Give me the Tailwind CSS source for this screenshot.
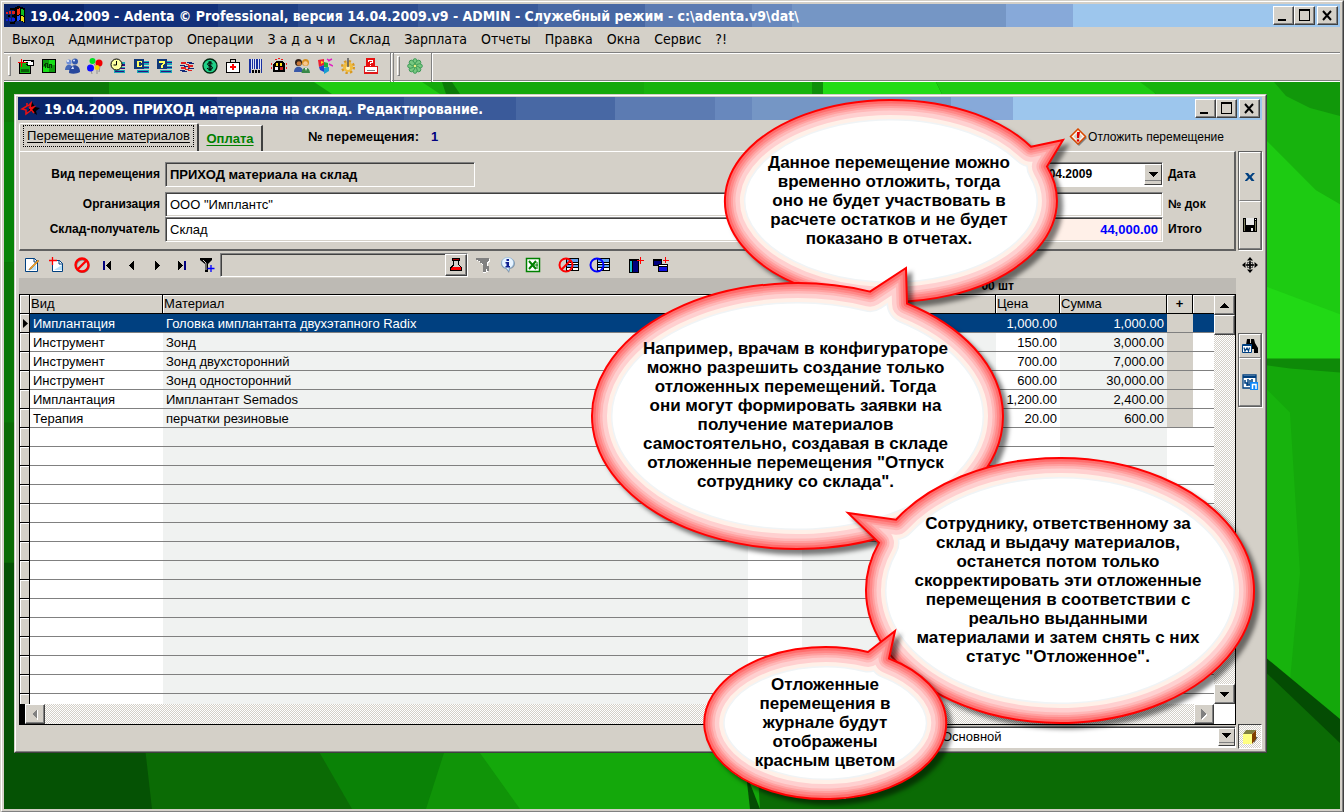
<!DOCTYPE html>
<html lang="ru">
<head>
  <meta charset="UTF-8">
  <meta name="viewport" content="width=device-width, initial-scale=1.0">
  <title>Adenta © Professional</title>
  <script src="https://cdn.jsdelivr.net/npm/@tailwindcss/browser@4"></script>
</head>
<body class="relative min-h-screen flex flex-col overflow-hidden bg-[#d4d0c8] text-black text-[13px] leading-4 font-['Liberation_Sans',Arial,sans-serif]">

  <!-- Application window -->
  <div class="flex-1 flex flex-col border border-t-[#d4d0c8] border-l-[#d4d0c8] border-r-[#404040] border-b-[#404040]">
  <div class="flex-1 flex flex-col border border-t-white border-l-white border-r-[#808080] border-b-[#808080] p-[2px]">

    <!-- Title bar -->
    <header class="h-[23px] flex items-center gap-1 pl-[2px] pr-[2px] bg-[linear-gradient(90deg,#0a246a_0_6%,#12307a_0_16%,#1f3f84_0_22%,#2c4c90_0_31%,#3a5a9a_0_40%,#4868a4_0_48%,#5c7bb2_0_56%,#6888bd_0_59%,#7596c5_0_75%,#87a9d9_0_80%,#9dc6ed_0)]">
      <svg class="w-5 h-5 shrink-0" viewBox="0 0 20 20" shape-rendering="crispEdges">
        <path d="M8 2l4-2 7 2v15l-4-2-4 0-3 2z" fill="#000"/>
        <path d="M11 3l3-1v6l-3 1z" fill="#f03010"/><path d="M15 3l3 1v6l-3-1z" fill="#10c020"/>
        <path d="M11 10l3-1v5l-3 1z" fill="#2050f0"/><path d="M15 10l3 1v5l-3-1z" fill="#f0e010"/>
        <path d="M0 6h2v2h-2zM3 5h2v3h-2zM6 5h3v3h-3z" fill="#e02020"/><path d="M0 13h2v2h-2zM3 12h2v3h-2zM6 12h3v3h-3z" fill="#1020e0"/>
        <path d="M2 9h2v2h-2zM6 9h3v2h-3zM4 2h4v2h-4zM4 16h5v2h-5z" fill="#000"/>
      </svg>
      <h1 class="flex-1 text-sm font-bold text-white whitespace-nowrap font-['DejaVu_Sans_Condensed','Noto_Sans',sans-serif]">19.04.2009 - Adenta © Professional, версия 14.04.2009.v9 - ADMIN - Служебный режим - c:\adenta.v9\dat\</h1>
      <div class="flex">
        <button aria-label="Свернуть" class="w-[21px] h-[19px] bg-[#d4d0c8] border border-t-white border-l-white border-r-[#404040] border-b-[#404040] shadow-[inset_-1px_-1px_#808080]"><svg class="w-full h-full" viewBox="0 0 19 17" shape-rendering="crispEdges"><path d="M4 12h8v2h-8z"/></svg></button>
        <button aria-label="Восстановить" class="w-[21px] h-[19px] bg-[#d4d0c8] border border-t-white border-l-white border-r-[#404040] border-b-[#404040] shadow-[inset_-1px_-1px_#808080]"><svg class="w-full h-full" viewBox="0 0 19 17" shape-rendering="crispEdges"><path fill-rule="evenodd" d="M4 2h11v12h-11zM5 4v9h9v-9z"/></svg></button>
        <button aria-label="Закрыть" class="ml-[2px] w-[21px] h-[19px] bg-[#d4d0c8] border border-t-white border-l-white border-r-[#404040] border-b-[#404040] shadow-[inset_-1px_-1px_#808080]"><svg class="w-full h-full" viewBox="0 0 19 17"><path d="M5 4l8 9M13 4l-8 9" stroke="#000" stroke-width="2"/></svg></button>
      </div>
    </header>

    <!-- Main menu -->
    <nav class="h-[25px] flex items-center gap-[14px] px-2 pb-px text-sm whitespace-nowrap font-['DejaVu_Sans_Condensed','Noto_Sans',sans-serif]">
      <a href="#">Выход</a>
      <a href="#">Администратор</a>
      <a href="#">Операции</a>
      <a href="#">З а д а ч и</a>
      <a href="#">Склад</a>
      <a href="#">Зарплата</a>
      <a href="#">Отчеты</a>
      <a href="#">Правка</a>
      <a href="#">Окна</a>
      <a href="#">Сервис</a>
      <a href="#">?!</a>
    </nav>

    <!-- Toolbar -->
    <div class="h-[30px] flex border-t border-[#808080] shadow-[inset_0_1px_#fff,inset_0_-1px_#fff,inset_0_-2px_#808080]">
      <div class="flex items-center pl-1 pr-2 pb-[3px] border-r border-[#808080] shadow-[1px_0_#fff]">
        <span class="w-[3px] h-5 mr-[3px] border border-t-white border-l-white border-r-[#808080] border-b-[#808080]"></span>
        <button aria-label="Рабочий стол" class="w-[23px] h-6 flex items-center justify-center"><svg class="w-4 h-4" viewBox="0 0 16 16" shape-rendering="crispEdges"><path d="M1 4h12v12h-12z"/><path d="M2 5h10v10h-10z" fill="#10b010"/><path d="M3 11h8v3h-8z" fill="#086008"/><path d="M5 2h11v6h-7l-2-2h3v-1h-5z"/><path d="M6 3h7v1h-7zM10 4h5v3h-5z" fill="#fff"/><path d="M3 1h1v8h-1zM0 4h8v1h-8z" fill="#f00"/></svg></button>
        <button aria-label="График" class="w-[23px] h-6 flex items-center justify-center"><svg class="w-4 h-4" viewBox="0 0 16 16" shape-rendering="crispEdges"><path d="M1 1h14v14h-14z"/><path d="M2 2h12v12h-12z" fill="#0c9c0c"/><path d="M8 2h6v5h-6zM2 9h6v5h-6z" fill="#18e018"/><path d="M3 6h1v-1h3v4h1v-3h3v4h-1v-3h-1v3h-3v-4h-1v4h-1z" fill="#043c04"/></svg></button>
        <button aria-label="Пациенты" class="w-[23px] h-6 flex items-center justify-center"><svg class="w-4 h-4" viewBox="0 0 16 16"><circle cx="5" cy="4" r="2.600" fill="#6f8fd8"/><path d="M1 12c0-7 8-7 8 0z" fill="#4468b8"/><circle cx="11" cy="3.500" r="3" fill="#3157ac"/><path d="M5 15c0-10 11-10 11-1-3 2-8 2-11 1z" fill="#28489c"/><circle cx="4" cy="3" r="1" fill="#fff"/><circle cx="10" cy="2.500" r="1" fill="#dbe6ff"/><path d="M7 11l2-3 1 3z" fill="#dbe6ff"/></svg></button>
        <button aria-label="Шары" class="w-[23px] h-6 flex items-center justify-center"><svg class="w-4 h-4" viewBox="0 0 16 16"><path d="M7 6l3 4v6M4 12l1 4M13 8l-1 6" fill="none" stroke="#909090"/><circle cx="5.500" cy="3" r="3" fill="#00e020"/><circle cx="12" cy="5" r="3.500" fill="#f00000"/><circle cx="3.500" cy="10" r="3.500" fill="#1010ff"/><circle cx="10" cy="9.500" r="2.500" fill="#f8d000"/></svg></button>
        <button aria-label="Время" class="w-[23px] h-6 flex items-center justify-center"><svg class="w-4 h-4" viewBox="0 0 16 16"><path d="M6 4h9v3h-9zM6 9h9v2h-9zM4 12h11v3h-11z" fill="#18a8b8"/><path d="M10 6h5v2h-5zM10 10h5v1h-5zM5 13h9v1h-9z" fill="#301080"/><circle cx="6.500" cy="6.500" r="5.500" fill="#ffffa0" stroke="#000"/><path d="M6.500 3v4h-3" fill="none" stroke="#000"/></svg></button>
        <button aria-label="Касса" class="w-[23px] h-6 flex items-center justify-center"><svg class="w-4 h-4" viewBox="0 0 16 16" shape-rendering="crispEdges"><path d="M9 3h7v4h-7zM9 8h7v3h-7zM4 12h12v3h-12z" fill="#18a8b8"/><path d="M11 4h5v1h-5zM11 9h5v1h-5zM5 13h10v1h-10z" fill="#301080"/><path d="M1 1h10v10h-10z" fill="#103878"/><path d="M9 3h-5v6h5v-2h-1v1h-2v-4h2v1h1z" fill="#ffff60"/></svg></button>
        <button aria-label="Неделя" class="w-[23px] h-6 flex items-center justify-center"><svg class="w-4 h-4" viewBox="0 0 16 16" shape-rendering="crispEdges"><path d="M9 3h7v4h-7zM9 8h7v3h-7zM4 12h12v3h-12z" fill="#18a8b8"/><path d="M11 4h5v1h-5zM11 9h5v1h-5zM5 13h10v1h-10z" fill="#301080"/><path d="M1 1h10v10h-10z" fill="#103878"/><path d="M3 3h6v2l-2 2v3h-2v-3l2-2h-4z" fill="#ffff60"/></svg></button>
        <button aria-label="Обмен" class="w-[23px] h-6 flex items-center justify-center"><svg class="w-4 h-4" viewBox="0 0 16 16" shape-rendering="crispEdges"><path d="M2 4h5v2h3v1h-3v-1h-5zM9 7h5v2h-3v1h-2zM2 9h5v2h3v1h-4v-1h-4zM9 12h4v1h-4z" fill="#e02020"/><path d="M8 4h5v1h2v1h-5v-1h-2zM1 7h5v1h3v1h-4v-1h-4zM9 10h6v1h-6zM1 12h5v1h2v1h-5v-1h-2z" fill="#102878"/></svg></button>
        <button aria-label="Деньги" class="w-[23px] h-6 flex items-center justify-center"><svg class="w-4 h-4" viewBox="0 0 16 16"><circle cx="8" cy="8" r="7" fill="#20d088" stroke="#002810" stroke-width="1.300"/><path d="M10.500 5.800c-1-1.500-5-1.500-5 .4s5 1.500 5 3.600-4.500 2-5.500.3M7.200 3v10M8.800 3v10" fill="none" stroke="#000" stroke-width="1"/></svg></button>
        <button aria-label="Аптечка" class="w-[23px] h-6 flex items-center justify-center"><svg class="w-4 h-4" viewBox="0 0 16 16" shape-rendering="crispEdges"><path d="M5 1h6v3h4v11h-14v-11h4z"/><path d="M6 2h4v2h-4z" fill="#d4d0c8"/><path d="M2 5h12v9h-12z" fill="#fff"/><path d="M7 6h2v2h2v2h-2v2h-2v-2h-2v-2h2z" fill="#f00"/></svg></button>
        <button aria-label="Штрих-код" class="w-[23px] h-6 flex items-center justify-center"><svg class="w-4 h-4" viewBox="0 0 16 16" shape-rendering="crispEdges"><path d="M1 1h13v10h-13z" fill="#e0e4f4"/><path d="M1 1h2v14h-2zM4 1h1v10h-1zM6 1h1v10h-1zM8 1h2v10h-2zM11 1h1v10h-1zM13 1h1v14h-1z" fill="#1830a0"/><path d="M4 12h2v3h-2zM7 12h2v3h-2zM10 12h2v3h-2z"/></svg></button>
        <button aria-label="Склад" class="w-[23px] h-6 flex items-center justify-center"><svg class="w-4 h-4" viewBox="0 0 16 16" shape-rendering="crispEdges"><path d="M5 3h6l3 3v8h-12v-8z"/><path d="M5 5h2v3h-2zM9 5h2v3h-2z" fill="#ffe020"/><path d="M4 9h3v3h-3z" fill="#f8f8f8"/><path d="M9 9h3v3h-3z" fill="#d02020"/><path d="M4 1h2v1h-2zM10 1h2v1h-2zM0 5h1v2h-1zM15 5h1v2h-1zM0 9h1v2h-1zM15 9h1v2h-1zM7 0h2v1h-2z" fill="#f02020"/></svg></button>
        <button aria-label="Сотрудники" class="w-[23px] h-6 flex items-center justify-center"><svg class="w-4 h-4" viewBox="0 0 16 16"><circle cx="4.500" cy="4.500" r="3.500" fill="#302018"/><circle cx="5" cy="5.500" r="2.300" fill="#c87838"/><path d="M0 14c0-7 9-7 9 0z" fill="#3858a8"/><circle cx="11.500" cy="4.500" r="3.500" fill="#d89020"/><circle cx="11.500" cy="5.500" r="2.300" fill="#f8c890"/><path d="M7.500 15c0-7 8.500-7 8.500 0z" fill="#388848"/><path d="M11 10l1 3 1-3z" fill="#fff"/></svg></button>
        <button aria-label="Кубики" class="w-[23px] h-6 flex items-center justify-center"><svg class="w-4 h-4" viewBox="0 0 16 16"><path d="M1 2l6-1v6l-5 2z" fill="#f02030"/><path d="M7 4l4 1v5l-4-1z" fill="#20b040"/><path d="M2 9l5-2v7l-4-2z" fill="#2040d0"/><path d="M7 10l5-1v4l-5 3z" fill="#18a0d0"/><path d="M10 1l3 2M12 6l4 2M11 3l4-2" stroke="#e020c0" stroke-width="1.500"/><path d="M4 3l3 1-3 2z" fill="#f8e020"/></svg></button>
        <button aria-label="Настройка" class="w-[23px] h-6 flex items-center justify-center"><svg class="w-4 h-4" viewBox="0 0 16 16"><circle cx="8" cy="9" r="5.800" fill="none" stroke="#d89820" stroke-width="2.500" stroke-dasharray="2.300 2.250"/><circle cx="8" cy="9" r="5" fill="#f0bc40"/><circle cx="8" cy="10" r="2" fill="#fff0b0"/><path d="M8 0v9" stroke="#585858" stroke-width="1.500"/></svg></button>
        <button aria-label="Справка" class="w-[23px] h-6 flex items-center justify-center"><svg class="w-4 h-4" viewBox="0 0 16 16" shape-rendering="crispEdges"><path d="M1 8h14v8h-14z" fill="#e01818"/><path d="M2 9h12v5h-12z" fill="#fff"/><path d="M4 12h8v1h-8z" fill="#808080"/><path d="M3 0h9v9h-9z" fill="#e81010"/><path d="M5 2h5v3h-2v1h-1v-2h2v-1h-3v1h-1zM7 7h1v1h-1z" fill="#fff"/></svg></button>
      </div>
      <div class="ml-[2px] flex items-center pl-[3px] pr-[5px] pb-[3px] border-x border-[#808080] shadow-[1px_0_#fff]">
        <span class="w-[3px] h-5 mr-[3px] border border-t-white border-l-white border-r-[#808080] border-b-[#808080]"></span>
        <button aria-label="Цветок" class="w-[23px] h-6 flex items-center justify-center"><svg class="w-4 h-4" viewBox="0 0 16 16"><g fill="#78c880" stroke="#30904c" stroke-width=".8"><ellipse id="petal" cx="8" cy="3.600" rx="2.200" ry="3"/><use href="#petal" transform="rotate(45 8 8)"/><use href="#petal" transform="rotate(90 8 8)"/><use href="#petal" transform="rotate(135 8 8)"/><use href="#petal" transform="rotate(180 8 8)"/><use href="#petal" transform="rotate(225 8 8)"/><use href="#petal" transform="rotate(270 8 8)"/><use href="#petal" transform="rotate(315 8 8)"/></g><circle cx="8" cy="8" r="1.300" fill="#e8f080"/></svg></button>
      </div>
    </div>

    <!-- Desktop -->
    <main class="relative flex-1 flex flex-col pt-3 pl-[10px] pr-[73px] pb-14 bg-[#0b6b05]">
      <svg class="absolute inset-0 w-full h-full" viewBox="0 0 1336 726" preserveAspectRatio="none">
        <path d="M0 0h1336v726H0z" fill="#0b6b05"/>
        <path d="M0 0h110v40H0z" fill="#0c7a08"/><path d="M0 40h12v140H0z" fill="#088408"/><path d="M0 180h12v160H0z" fill="#0a7806"/>
        <path d="M0 480h120l28 246H0z" fill="#055204"/>
        <path d="M105 0h210l20 12H105z" fill="#0f9a0a"/><path d="M310 0h120l12 12H328z" fill="#1fcb12"/><path d="M418 0h320v12H436z" fill="#15a90c"/><path d="M438 0h10l8 12h-14z" fill="#0c7a08"/>
        <path d="M640 0h178v12H640z" fill="#17b30d"/><path d="M808 0h11v12h-11z" fill="#0f8f0a"/>
        <path d="M819 0h113l6 12H819z" fill="#22dc16"/><path d="M932 0h208l12 12H938z" fill="#1dcb12"/>
        <path d="M1136 0h200v270h-80V12h-100z" fill="#1dcb12"/>
        <path d="M1136 0h200v122l-24-14-50-50-6-46h-104z" fill="#17b30d"/><path d="M1270 0h66v34l-30-8-24-12z" fill="#11980a"/>
        <path d="M1256 202l80 30v46h-80z" fill="#21d915"/>
        <path d="M1256 278h80v362l-80-70z" fill="#14a80b"/><path d="M1256 276h80v14l-50-4-30-4z" fill="#0e8a08"/>
        <path d="M1256 300l30 30 10 160-10 108-30-26z" fill="#17b30d"/>
        <path d="M1256 570l80 66v24l-80-76z" fill="#044c03"/>
        <path d="M310 660h180l-10 66H348z" fill="#0a8206"/><path d="M450 660h310v66H430z" fill="#14a80b"/><path d="M440 670h36l40 56h-94z" fill="#109408"/>
        <path d="M742 690l14 36h-10z" fill="#044c03"/>
        <path d="M752 660h504v66H756z" fill="#0b6b05"/>
      </svg>

      <!-- Document window -->
      <section class="relative flex-1 flex flex-col bg-[#d4d0c8] border border-t-[#d4d0c8] border-l-[#d4d0c8] border-r-[#404040] border-b-[#404040]">
      <div class="flex-1 flex flex-col pl-[2px] pr-[3px] pt-px border border-t-white border-l-white border-r-[#808080] border-b-[#808080]">
        <header class="h-[23px] flex items-center gap-1 pl-[2px] pr-[2px] bg-[linear-gradient(90deg,#0a246a_0_6%,#12307a_0_16%,#1f3f84_0_22%,#2c4c90_0_31%,#3a5a9a_0_40%,#4868a4_0_48%,#5c7bb2_0_56%,#6888bd_0_59%,#7596c5_0_75%,#87a9d9_0_80%,#9dc6ed_0)]">
          <svg class="w-5 h-5 shrink-0" viewBox="0 0 20 20"><path d="M12 3l3 5 5 1-4 3 1 4-6-4-3 1 2-5z" fill="#000"/><path d="M7 4v3l-5 3 4 1v4l4-3 4-4-4 1 1-5-3 3M9 8l5 6" fill="none" stroke="#f01010" stroke-width="1.500"/></svg>
          <h2 class="flex-1 text-sm font-bold text-white whitespace-nowrap font-['DejaVu_Sans_Condensed','Noto_Sans',sans-serif]">19.04.2009. ПРИХОД материала на склад. Редактирование.</h2>
          <div class="flex">
            <button aria-label="Свернуть окно" class="w-[21px] h-[19px] bg-[#d4d0c8] border border-t-white border-l-white border-r-[#404040] border-b-[#404040] shadow-[inset_-1px_-1px_#808080]"><svg class="w-full h-full" viewBox="0 0 19 17" shape-rendering="crispEdges"><path d="M4 12h8v2h-8z"/></svg></button>
            <button aria-label="Развернуть окно" class="w-[21px] h-[19px] bg-[#d4d0c8] border border-t-white border-l-white border-r-[#404040] border-b-[#404040] shadow-[inset_-1px_-1px_#808080]"><svg class="w-full h-full" viewBox="0 0 19 17" shape-rendering="crispEdges"><path fill-rule="evenodd" d="M4 2h11v12h-11zM5 4v9h9v-9z"/></svg></button>
            <button aria-label="Закрыть окно" class="ml-[2px] w-[21px] h-[19px] bg-[#d4d0c8] border border-t-white border-l-white border-r-[#404040] border-b-[#404040] shadow-[inset_-1px_-1px_#808080]"><svg class="w-full h-full" viewBox="0 0 19 17"><path d="M5 4l8 9M13 4l-8 9" stroke="#000" stroke-width="2"/></svg></button>
          </div>
        </header>

        <!-- Tabs -->
        <div class="h-[31px] flex items-end pl-px whitespace-nowrap">
          <button class="h-7 w-[180px] pb-1 border-t border-l border-white border-r-2 border-r-[#404040] rounded-t-xs"><span class="inline-block px-[3px] py-[2px] border border-dotted border-black underline underline-offset-2">Перемещение материалов</span></button>
          <button class="h-[26px] w-16 border-t border-white border-r-2 border-r-[#404040] font-bold text-[#008000] underline underline-offset-2">Оплата</button>
          <p class="h-[22px] ml-[45px] font-bold">№ перемещения:</p>
          <p class="h-[22px] ml-[12px] font-bold text-[#000080]">1</p>
          <button class="h-7 ml-auto mr-[38px] flex items-center gap-px text-xs">
            <svg class="w-[18px] h-[18px]" viewBox="0 0 18 18"><path d="M10 2l8 8-8 8-8-8z" fill="#808080"/><path d="M9 1l7.500 7.500-7.500 7.500-7.500-7.500z" fill="#fff4ec" stroke="#d84800" stroke-width="1.500"/><path d="M9 4l4.500 4.500-4.500 4.500-4.500-4.500z" fill="#d4d0c8"/><path d="M8 4h3l-1 6h-2z" fill="#e00000"/><circle cx="9" cy="12.500" r="1.300" fill="#e00000"/></svg>
            Отложить перемещение
          </button>
        </div>

        <div class="flex-1 flex">
          <div class="flex-1 min-w-0 flex flex-col pl-px">
            <!-- Header form -->
            <form class="h-[100px] pt-[10px] grid grid-cols-[140px_minmax(0,1fr)_150px_66px] grid-rows-[30px_25px_25px] content-start items-start gap-x-[5px] text-xs leading-[25px] font-bold border-t border-l border-white border-r-2 border-b-2 border-r-[#606060] border-b-[#606060]">
              <label for="kind" class="text-right">Вид перемещения</label>
              <input id="kind" readonly value="ПРИХОД материала на склад" class="w-[310px] h-[25px] px-1 text-[13px] bg-[#d4d0c8] border border-t-[#808080] border-l-[#808080] border-r-white border-b-white shadow-[inset_1px_1px_#404040]">
              <div class="h-[25px] flex bg-white border border-t-[#808080] border-l-[#808080] border-r-white border-b-white shadow-[inset_1px_1px_#404040]">
                <input id="date" value="19.04.2009" class="flex-1 min-w-0 pl-[18px]">
                <button type="button" aria-label="Календарь" class="m-[1px] mr-0 w-[18px] border border-t-white border-l-white border-r-[#404040] border-b-[#404040] bg-[#d4d0c8] flex flex-col items-center justify-between pt-1"><svg class="w-[9px] h-[10px]" viewBox="0 0 9 10" shape-rendering="crispEdges"><path d="M0 3h9v1h-1v1h-1v1h-1v1h-1v1h-1v-1h-1v-1h-1v-1h-1v-1h-1z"/></svg><span class="w-full h-1 border-t border-[#808080]"></span></button>
              </div>
              <label for="date">Дата</label>

              <label for="org" class="text-right">Организация</label>
              <input id="org" value='ООО "Имплантс"' class="mr-24 h-[25px] px-1 text-[13px] font-normal bg-white border border-t-[#808080] border-l-[#808080] border-r-white border-b-white shadow-[inset_1px_1px_#404040,inset_-1px_-1px_#d4d0c8]">
              <input id="doc" class="h-[25px] px-1 bg-white border border-t-[#808080] border-l-[#808080] border-r-white border-b-white shadow-[inset_1px_1px_#404040,inset_-1px_-1px_#d4d0c8]">
              <label for="doc">№ док</label>

              <label for="store" class="text-right">Склад-получатель</label>
              <input id="store" value="Склад" class="mr-24 h-[25px] px-1 text-[13px] font-normal bg-white border border-t-[#808080] border-l-[#808080] border-r-white border-b-white shadow-[inset_1px_1px_#404040,inset_-1px_-1px_#d4d0c8]">
              <input id="total" readonly value="44,000.00" class="h-[25px] px-1 text-[13px] text-right text-[#0000ff] bg-[#fff0e8] border border-t-[#808080] border-l-[#808080] border-r-white border-b-white shadow-[inset_1px_1px_#404040,inset_-1px_-1px_#d4d0c8]">
              <label for="total">Итого</label>
            </form>

            <!-- Grid toolbar -->
            <div class="h-[27px] flex items-center">
              <button aria-label="Изменить" class="w-[25px] h-6 flex items-center justify-center"><svg class="w-4 h-4" viewBox="0 0 16 16"><path d="M1.500 1.500h9l3 3v10h-12z" fill="#fff" stroke="#004080"/><path d="M3 13h9v-5z" fill="#b8e0f8"/><path d="M10 1v4h4" fill="none" stroke="#004080"/><path d="M15 4l-8 8-2 1 1-2 8-8z" fill="#f0a020" stroke="#a06010" stroke-width=".5"/></svg></button>
              <button aria-label="Добавить" class="w-[25px] h-6 flex items-center justify-center"><svg class="w-4 h-4" viewBox="0 0 16 16"><path d="M3.500 3.500h7l3 3v8h-10z" fill="#fff" stroke="#004080"/><path d="M5 13h8v-5z" fill="#b8e0f8"/><path d="M10 3v4h4" fill="none" stroke="#004080"/><path d="M3.500 0v8M0 3.500h8" stroke="#f00" stroke-width="1.300"/></svg></button>
              <button aria-label="Удалить" class="w-[25px] h-6 flex items-center justify-center"><svg class="w-4 h-4" viewBox="0 0 16 16"><circle cx="8.500" cy="8.800" r="6.300" fill="none" stroke="#808080" stroke-width="2"/><circle cx="8" cy="8" r="6.500" fill="none" stroke="#f00" stroke-width="2.300"/><path d="M12.500 3.500l-9 9" stroke="#f00" stroke-width="2.300"/></svg></button>
              <button aria-label="Первая" class="w-[25px] h-6 flex items-center justify-center"><svg class="w-4 h-4" viewBox="0 0 16 16" shape-rendering="crispEdges"><path d="M4 4h2v9h-2z" fill="#000080"/><path d="M12 4v9l-5-4.500z"/></svg></button>
              <button aria-label="Предыдущая" class="w-[25px] h-6 flex items-center justify-center"><svg class="w-4 h-4" viewBox="0 0 16 16" shape-rendering="crispEdges"><path d="M10 4v9l-5-4.500z"/></svg></button>
              <button aria-label="Следующая" class="w-[25px] h-6 flex items-center justify-center"><svg class="w-4 h-4" viewBox="0 0 16 16" shape-rendering="crispEdges"><path d="M6 4v9l5-4.500z"/></svg></button>
              <button aria-label="Последняя" class="w-[25px] h-6 flex items-center justify-center"><svg class="w-4 h-4" viewBox="0 0 16 16" shape-rendering="crispEdges"><path d="M4 4v9l5-4.500z"/><path d="M10 4h2v9h-2z" fill="#000080"/></svg></button>
              <button aria-label="Фильтр" class="w-[25px] h-6 flex items-center justify-center"><svg class="w-4 h-4" viewBox="0 0 16 16"><path d="M1 1h12v2l-4 4v8h-3v-8l-5-4z"/><path d="M4 3l3 3v7" fill="none" stroke="#d4d0c8"/><path d="M12 8v7M8.500 11.500h7" stroke="#0000ff" stroke-width="1.300"/></svg></button>
              <div class="ml-[1px] w-[248px] h-6 flex border border-t-[#808080] border-l-[#808080] border-r-white border-b-white shadow-[inset_1px_1px_#404040]">
                <input aria-label="Поиск" class="flex-1 min-w-0 px-1">
                <button aria-label="Найти" class="w-[22px] flex items-center justify-center bg-[#d4d0c8] border border-t-white border-l-white border-r-[#404040] border-b-[#404040] shadow-[inset_-1px_-1px_#808080]"><svg class="w-[14px] h-[14px]" viewBox="0 0 14 14" shape-rendering="crispEdges"><path d="M3 0h8v3h-1v3l3 4v3h-12v-3l3-4v-3h-1z"/><path d="M4 1h6v1h-6z" fill="#a00000"/><path d="M5 3h4v4l2 2h-8l2-2z" fill="#d4d0c8"/><path d="M3 9h8l1 1v2h-10v-2z" fill="#f00"/></svg></button>
              </div>
              <button aria-label="Снять фильтр" class="ml-[2px] w-[25px] h-6 flex items-center justify-center"><svg class="w-4 h-4" viewBox="0 0 16 16" shape-rendering="crispEdges"><path d="M2 2h13v3l-2 1v9h-2v1h-3v-3h1v-3l-3-3v-2l-4-1z" fill="#fff"/><path d="M1 1h13v3l-2 1v4h2v5h-2v-2h-1v3h-3v-8l-3-1v-2l-4-1z" fill="#808080"/></svg></button>
              <button aria-label="Информация" class="w-[25px] h-6 flex items-center justify-center"><svg class="w-4 h-4" viewBox="0 0 16 16"><path d="M8 1c9 0 9 10 2 11l-1 4-3-4c-7-1-7-11 2-11z" fill="#8898a8"/><path d="M7.500 .5c8 0 8 10 1.500 10.500v3l-3-3c-6-1-6-10.500 1.500-10.500z" fill="#e8f4ff" stroke="#80b0d8" stroke-width=".6"/><path d="M6.500 2h2.500v2h-2.500zM5.500 5h3.500v4h1v1.500h-4.500v-1.500h1v-2.500h-1z" fill="#102090"/></svg></button>
              <button aria-label="Экспорт в Excel" class="w-[25px] h-6 flex items-center justify-center"><svg class="w-4 h-4" viewBox="0 0 16 16"><path d="M1.500 1.500h13v13h-13z" fill="#fff" stroke="#008000" stroke-width="1.500"/><path d="M4 4l7 8M11 4l-7 8" stroke="#008000" stroke-width="2"/><path d="M9 8h4M12 5v7" stroke="#008000"/></svg></button>
              <button aria-label="Отменить строки" class="ml-2 w-[31px] h-6 flex items-center justify-center"><svg class="w-[22px] h-4" viewBox="0 0 22 16"><path d="M8 1h13v13h-13z"/><path d="M9 2h11v3h-11zM9 8h11v2h-11z" fill="#60a0f0"/><path d="M9 6h5v1h-5zM15 6h5v1h-5zM9 11h5v2h-5zM15 11h5v2h-5z" fill="#fff"/><circle cx="8" cy="8" r="6.500" fill="none" stroke="#f00" stroke-width="2"/><path d="M12.500 3.500l-9 9" stroke="#f00" stroke-width="2"/></svg></button>
              <button aria-label="Выбрать строки" class="w-[31px] h-6 flex items-center justify-center"><svg class="w-[22px] h-4" viewBox="0 0 22 16"><path d="M8 1h13v13h-13z"/><path d="M9 2h11v3h-11zM9 8h11v2h-11z" fill="#60a0f0"/><path d="M9 6h5v1h-5zM15 6h5v1h-5zM9 11h5v2h-5zM15 11h5v2h-5z" fill="#fff"/><circle cx="8" cy="8" r="6.500" fill="none" stroke="#0000ff" stroke-width="2"/></svg></button>
              <button aria-label="Новая книга" class="ml-2 w-[25px] h-6 flex items-center justify-center"><svg class="w-4 h-4" viewBox="0 0 16 16" shape-rendering="crispEdges"><path d="M1 2h10v14h-10z"/><path d="M2 4h2v11h-2z" fill="#20c0d0"/><path d="M5 4h5v11h-5z" fill="#000080"/><path d="M12 0h1v7h-1zM9 3h7v1h-7z" fill="#f00"/></svg></button>
              <button aria-label="Копировать" class="w-[25px] h-6 flex items-center justify-center"><svg class="w-4 h-4" viewBox="0 0 16 16" shape-rendering="crispEdges"><path d="M0 2h9v7h-9z"/><path d="M1 4h7v4h-7z" fill="#000080"/><path d="M5 7h10v8h-10z"/><path d="M6 8h8v1h-8z" fill="#fff"/><path d="M6 10h8v4h-8z" fill="#1010e0"/><path d="M12 0h1v6h-1zM10 3h6v1h-6z" fill="#f00"/></svg></button>
            </div>

            <div class="h-4 pr-[222px] text-right text-xs leading-4 font-bold bg-[#bdbab4]">00 шт</div>

            <!-- Materials table -->
            <div class="flex-1 flex flex-col border-y border-r border-black bg-white">
              <div class="flex-1 flex">
                <div class="relative flex-1 h-[409px] overflow-hidden">
                  <table class="w-full table-fixed border-separate border-spacing-0 whitespace-nowrap">
                    <colgroup>
                      <col class="w-[11px]"><col class="w-[133px]"><col><col class="w-[54px]"><col class="w-[194px]"><col class="w-16"><col class="w-[107px]"><col class="w-[26px]"><col class="w-[21px]">
                    </colgroup>
                    <thead>
                      <tr class="h-[19px] bg-[#d4d0c8] text-left">
                        <th class="p-0 border-x border-b border-black shadow-[inset_1px_1px_#fff]"></th>
                        <th class="p-0 pl-px font-normal border-b border-r border-black shadow-[inset_1px_1px_#fff]">Вид</th>
                        <th class="p-0 pl-px font-normal border-b border-black shadow-[inset_1px_1px_#fff]">Материал</th>
                        <th class="p-0 border-b border-l border-black shadow-[inset_1px_1px_#fff]"></th>
                        <th class="p-0 border-b border-x border-black shadow-[inset_1px_1px_#fff]"></th>
                        <th class="p-0 pl-px font-normal border-b border-r border-black shadow-[inset_1px_1px_#fff]">Цена</th>
                        <th class="p-0 pl-px font-normal border-b border-r border-black shadow-[inset_1px_1px_#fff]">Сумма</th>
                        <th class="p-0 text-center font-bold border-b border-r border-black shadow-[inset_1px_1px_#fff]">+</th>
                        <th class="p-0 border-b border-black shadow-[inset_1px_1px_#fff]"></th>
                      </tr>
                    </thead>
                    <tbody id="materials"></tbody>
                  </table>
                </div>
                <div class="w-[21px] flex flex-col bg-[conic-gradient(#fff_25%,#d4d0c8_0_50%,#fff_0_75%,#d4d0c8_0)] [background-size:2px_2px]">
                  <button aria-label="Вверх" class="h-5 flex items-center justify-center bg-[#d4d0c8] border border-t-white border-l-white border-r-[#404040] border-b-[#404040] shadow-[inset_-1px_-1px_#808080]"><svg class="w-[9px] h-[5px]" viewBox="0 0 9 5" shape-rendering="crispEdges"><path d="M0 5h9v-1h-1v-1h-1v-1h-1v-1h-1v-1h-1v1h-1v1h-1v1h-1v1h-1z"/></svg></button>
                  <span class="h-5 bg-[#d4d0c8] border border-t-white border-l-white border-r-[#404040] border-b-[#404040] shadow-[inset_-1px_-1px_#808080]"></span>
                  <button aria-label="Вниз" class="mt-auto h-5 flex items-center justify-center bg-[#d4d0c8] border border-t-white border-l-white border-r-[#404040] border-b-[#404040] shadow-[inset_-1px_-1px_#808080]"><svg class="w-[9px] h-[5px]" viewBox="0 0 9 5" shape-rendering="crispEdges"><path d="M0 0h9v1h-1v1h-1v1h-1v1h-1v1h-1v-1h-1v-1h-1v-1h-1v-1h-1z"/></svg></button>
                </div>
              </div>
              <div class="h-5 flex mr-[21px] border-l-6 border-black bg-[conic-gradient(#fff_25%,#d4d0c8_0_50%,#fff_0_75%,#d4d0c8_0)] [background-size:2px_2px]">
                <button aria-label="Влево" class="w-5 flex items-center justify-center bg-[#d4d0c8] border border-t-white border-l-white border-r-[#404040] border-b-[#404040] shadow-[inset_-1px_-1px_#808080]"><svg class="w-[6px] h-[11px]" viewBox="0 0 6 11" shape-rendering="crispEdges"><path d="M5 1h1v10h-1z" fill="#fff"/><path d="M5 0v10l-5-5z" fill="#808080"/></svg></button>
                <button aria-label="Вправо" class="ml-auto w-5 flex items-center justify-center bg-[#d4d0c8] border border-t-white border-l-white border-r-[#404040] border-b-[#404040] shadow-[inset_-1px_-1px_#808080]"><svg class="w-[6px] h-[11px]" viewBox="0 0 6 11" shape-rendering="crispEdges"><path d="M1 1v10l5-5z" fill="#fff"/><path d="M0 0v10l5-5z" fill="#808080"/></svg></button>
              </div>
            </div>

            <div class="h-[26px] flex justify-end pt-px">
              <div class="relative w-[297px] h-[22px]">
                <select aria-label="Склад" class="w-full h-full appearance-none pl-[2px] bg-white border border-t-[#808080] border-l-[#808080] border-r-white border-b-white shadow-[inset_1px_1px_#404040]">
                  <option>Основной</option>
                </select>
                <span class="absolute right-px top-[2px] w-[17px] h-[18px] flex flex-col items-center justify-between pt-1 pointer-events-none bg-[#d4d0c8] border border-t-white border-l-white border-r-[#404040] border-b-[#404040]"><svg class="w-[9px] h-[5px]" viewBox="0 0 9 5" shape-rendering="crispEdges"><path d="M0 0h9v1h-1v1h-1v1h-1v1h-1v1h-1v-1h-1v-1h-1v-1h-1v-1h-1z"/></svg><span class="w-full h-[3px] border-t border-[#808080]"></span></span>
              </div>
            </div>
          </div>

          <!-- Side buttons -->
          <aside class="w-[26px] pl-[2px] flex flex-col">
            <div class="h-[99px] flex flex-col border border-[#606060] shadow-[1px_1px_#fff]">
              <button aria-label="Отмена" class="h-[49px] flex items-center justify-center border border-t-white border-l-white border-r-[#808080] border-b-[#808080]"><svg class="w-[10px] h-[10px]" viewBox="0 0 10 10"><path d="M0 1h3l2 2.500 2.500-2.500h2.500l-3.500 4 3 4h-3l-2-2.500-2.500 2.500h-2.500l3.500-4z" fill="#004080"/></svg></button>
              <button aria-label="Сохранить" class="flex-1 flex items-center justify-center border border-t-white border-l-white border-r-[#808080] border-b-[#808080]"><svg class="w-4 h-4" viewBox="0 0 16 16" shape-rendering="crispEdges"><path d="M1 1h14v14h-14z"/><path d="M2 2h1v12h-1zM13 4h1v10h-1z" fill="#808060"/><path d="M4 1h8v7h-8zM9 11h2v3h-2z" fill="#e8e8e8"/><path d="M13 2h1v1h-1z" fill="#fff"/></svg></button>
            </div>
            <button aria-label="Переместить" class="mt-[7px] mb-[60px] h-4 flex items-center justify-center"><svg class="w-4 h-4" viewBox="0 0 16 16"><path d="M8 0l3 3.500h-6zM8 16l3-3.500h-6zM0 8l3.500-3v6zM16 8l-3.500-3v6z"/><path d="M5 5h6v6h-6z" fill="#606060"/><path d="M8 4v8M4 8h8" stroke="#000" stroke-width="1.500"/><path d="M6 6h1v1h-1zM9 6h1v1h-1zM6 9h1v1h-1zM9 9h1v1h-1z" fill="#d4d0c8"/></svg></button>
            <div class="h-[74px] flex flex-col border border-[#606060] shadow-[1px_1px_#fff]">
              <button aria-label="Найти в Word" class="h-6 flex items-center justify-center border border-t-white border-l-white border-r-[#808080] border-b-[#808080]"><svg class="w-4 h-4" viewBox="0 0 16 16"><path d="M5 1h3v4h1v-4h3l1 4 3 5v5h-4v-4h-2v-4h-6z"/><path d="M.5 6.500h9v8h-9z" fill="#fff" stroke="#004080"/><path d="M.5 7.500h9" stroke="#004080"/><path d="M2 9.500l1 3.500 2-3 1.500 3 1-3.500" fill="none" stroke="#004080" stroke-width="1.200"/></svg></button>
              <button aria-label="Отчет Word" class="flex-1 flex items-center justify-center border border-t-white border-l-white border-r-[#808080] border-b-[#808080]"><svg class="w-4 h-4" viewBox="0 0 16 16"><path d="M1 1h13v13h-13z" fill="#fff" stroke="#004080" stroke-width="1.300"/><path d="M1 3h13" stroke="#004080" stroke-width="2"/><path d="M3 6v3h2v3M6 5v6h2v-5M10 5v3" fill="none" stroke="#004080" stroke-width="1.500"/><path d="M8 8h8v8h-8z" fill="#1088f8"/><path d="M10.500 15v-4.500h3.500v4.500" fill="none" stroke="#fff" stroke-width="1.500"/></svg></button>
            </div>
            <button aria-label="Контейнер" class="mt-auto mb-[2px] h-[25px] flex items-center justify-center border border-t-[#404040] border-l-[#404040] border-r-white border-b-white bg-[conic-gradient(#fff_25%,#d4d0c8_0_50%,#fff_0_75%,#d4d0c8_0)] [background-size:2px_2px]"><svg class="w-4 h-4" viewBox="0 0 16 16"><path d="M12 8h4l-4 6z" fill="#606060"/><path d="M1 5l3-4h10l-4 4z" fill="#808040"/><path d="M1 5h9v10h-9z" fill="#ffff80"/><path d="M10 5l4-4v9l-4 5z" fill="#804000"/></svg></button>
          </aside>
        </div>
      </div>
      </section>
    </main>
  </div>
  </div>

  <!-- Callouts -->
  <figure class="absolute left-[725px] top-[100px] w-[332px] h-[202px] flex items-center justify-center text-center text-[17px] leading-[19px] font-bold">
    <svg class="absolute inset-0 w-full h-full overflow-visible drop-shadow-[5px_5px_2px_rgba(0,0,0,0.5)]" viewBox="0 0 332 202" fill="none">
      <defs><path id="b1" d="M306 46.700L338 40L322 66.500A166 101 0 1 1 306 46.700z"/></defs>
      <clipPath id="c1"><use href="#b1"/></clipPath>
      <use href="#b1" fill="#fff"/>
      <g clip-path="url(#c1)" stroke-linejoin="round">
        <use href="#b1" stroke="#f0f4f6" stroke-width="41"/><use href="#b1" stroke="#fff0e8" stroke-width="38"/><use href="#b1" stroke="#ffd0d0" stroke-width="30"/><use href="#b1" stroke="#ffb8b8" stroke-width="21"/><use href="#b1" stroke="#ffa0a0" stroke-width="16"/><use href="#b1" stroke="#ff8888" stroke-width="12"/><use href="#b1" stroke="#ff6c6c" stroke-width="7"/>
      </g>
      <use href="#b1" stroke="#f00" stroke-width="2"/>
    </svg>
    <figcaption class="relative pr-1 pb-[2px] whitespace-nowrap">Данное перемещение можно<br>временно отложить, тогда<br>оно не будет участвовать в<br>расчете остатков и не будет<br>показано в отчетах.</figcaption>
  </figure>

  <figure class="absolute left-[592px] top-[283px] w-[411px] h-[266px] flex items-center justify-center text-center text-[17px] leading-[19px] font-bold">
    <svg class="absolute inset-0 w-full h-full overflow-visible drop-shadow-[5px_5px_2px_rgba(0,0,0,0.5)]" viewBox="0 0 411 266" fill="none">
      <defs><path id="b2" d="M278 8.600L314 -15L315 20.500A205.500 133 0 1 1 278 8.600z"/></defs>
      <clipPath id="c2"><use href="#b2"/></clipPath>
      <use href="#b2" fill="#fff"/>
      <g clip-path="url(#c2)" stroke-linejoin="round">
        <use href="#b2" stroke="#f0f4f6" stroke-width="41"/><use href="#b2" stroke="#fff0e8" stroke-width="38"/><use href="#b2" stroke="#ffd0d0" stroke-width="30"/><use href="#b2" stroke="#ffb8b8" stroke-width="21"/><use href="#b2" stroke="#ffa0a0" stroke-width="16"/><use href="#b2" stroke="#ff8888" stroke-width="12"/><use href="#b2" stroke="#ff6c6c" stroke-width="7"/>
      </g>
      <use href="#b2" stroke="#f00" stroke-width="2"/>
    </svg>
    <figcaption class="relative pr-1 pb-[2px] whitespace-nowrap">Например, врачам в конфигураторе<br>можно разрешить создание только<br>отложенных перемещений. Тогда<br>они могут формировать заявки на<br>получение материалов<br>самостоятельно, создавая в складе<br>отложенные перемещения "Отпуск<br>сотруднику со склада".</figcaption>
  </figure>

  <figure class="absolute left-[866px] top-[458px] w-[388px] h-[265px] flex items-center justify-center text-center text-[17px] leading-[19px] font-bold">
    <svg class="absolute inset-0 w-full h-full overflow-visible drop-shadow-[5px_5px_2px_rgba(0,0,0,0.5)]" viewBox="0 0 388 265" fill="none">
      <defs><path id="b3" d="M13 84.800L-18 55L30 61.700A194 132.500 0 1 1 13 84.800z"/></defs>
      <clipPath id="c3"><use href="#b3"/></clipPath>
      <use href="#b3" fill="#fff"/>
      <g clip-path="url(#c3)" stroke-linejoin="round">
        <use href="#b3" stroke="#f0f4f6" stroke-width="41"/><use href="#b3" stroke="#fff0e8" stroke-width="38"/><use href="#b3" stroke="#ffd0d0" stroke-width="30"/><use href="#b3" stroke="#ffb8b8" stroke-width="21"/><use href="#b3" stroke="#ffa0a0" stroke-width="16"/><use href="#b3" stroke="#ff8888" stroke-width="12"/><use href="#b3" stroke="#ff6c6c" stroke-width="7"/>
      </g>
      <use href="#b3" stroke="#f00" stroke-width="2"/>
    </svg>
    <figcaption class="relative pr-1 pb-[2px] whitespace-nowrap">Сотруднику, ответственному за<br>склад и выдачу материалов,<br>останется потом только<br>скорректировать эти отложенные<br>перемещения в соответствии с<br>реально выданными<br>материалами и затем снять с них<br>статус "Отложенное".</figcaption>
  </figure>

  <figure class="absolute left-[704px] top-[647px] w-[242px] h-[152px] flex items-center justify-center text-center text-[17px] leading-[19px] font-bold">
    <svg class="absolute inset-0 w-full h-full overflow-visible drop-shadow-[5px_5px_2px_rgba(0,0,0,0.5)]" viewBox="0 0 242 152" fill="none">
      <defs><path id="b4" d="M164 5L191 -16L185 11.500A121 76 0 1 1 164 5z"/></defs>
      <clipPath id="c4"><use href="#b4"/></clipPath>
      <use href="#b4" fill="#fff"/>
      <g clip-path="url(#c4)" stroke-linejoin="round">
        <use href="#b4" stroke="#f0f4f6" stroke-width="41"/><use href="#b4" stroke="#fff0e8" stroke-width="38"/><use href="#b4" stroke="#ffd0d0" stroke-width="30"/><use href="#b4" stroke="#ffb8b8" stroke-width="21"/><use href="#b4" stroke="#ffa0a0" stroke-width="16"/><use href="#b4" stroke="#ff8888" stroke-width="12"/><use href="#b4" stroke="#ff6c6c" stroke-width="7"/>
      </g>
      <use href="#b4" stroke="#f00" stroke-width="2"/>
    </svg>
    <figcaption class="relative pb-[2px] whitespace-nowrap">Отложенные<br>перемещения в<br>журнале будут<br>отображены<br>красным цветом</figcaption>
  </figure>

  <script>
    const rows = [
      ['Имплантация', 'Головка имплантанта двухэтапного Radix', '1,000.00', '1,000.00'],
      ['Инструмент', 'Зонд', '150.00', '3,000.00'],
      ['Инструмент', 'Зонд двухсторонний', '700.00', '7,000.00'],
      ['Инструмент', 'Зонд односторонний', '600.00', '30,000.00'],
      ['Имплантация', 'Имплантант Semados', '1,200.00', '2,400.00'],
      ['Терапия', 'перчатки резиновые', '20.00', '600.00']
    ];
    const body = document.getElementById('materials');

    // data rows first, then blank ones down to the scrollbar
    for (let i = 0; i < 21; i++) {
      const [kind, name, price, sum] = rows[i] || ['', '', '', ''];
      const selected = i === 0;
      const white = selected ? 'bg-[#004080]' : 'bg-white';
      const grey = selected ? 'bg-[#004080]' : 'bg-[#f0f2f1]';
      const plus = rows[i] ? 'bg-[#d4d0c8]' : 'bg-white';
      const tr = document.createElement('tr');
      tr.className = selected ? 'h-[19px] text-white' : 'h-[19px]';
      tr.innerHTML = `
        <td class="p-0 bg-[#d4d0c8] border-x border-b border-black shadow-[inset_1px_1px_#fff]">${selected ? '<svg class="w-[5px] h-[9px] ml-[3px]" viewBox="0 0 5 9"><path d="M0 0v9l5-4.500z"/></svg>' : ''}</td>
        <td class="p-0 pt-px pl-[3px] border-b border-[#808080] ${white}">${kind}</td>
        <td class="p-0 pt-px pl-[3px] border-b border-[#808080] ${grey}">${name}</td>
        <td class="p-0 border-b border-[#808080] ${white}"></td>
        <td class="p-0 border-b border-[#808080] ${grey}"></td>
        <td class="p-0 pt-px pr-[3px] text-right border-b border-[#808080] ${white}">${price}</td>
        <td class="p-0 pt-px pr-[3px] text-right border-b border-[#808080] ${grey}">${sum}</td>
        <td class="p-0 border-b border-[#808080] ${plus}"></td>
        <td class="p-0 border-b border-[#808080] ${white}"></td>`;
      body.appendChild(tr);
    }
  </script>
</body>
</html>
